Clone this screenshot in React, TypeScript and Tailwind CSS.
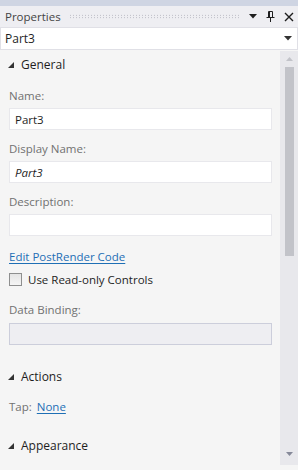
const font = { fontFamily: '"Open Sans", "Noto Sans", sans-serif' };

function Caret() {
  return (
    <svg width="6" height="6" viewBox="0 0 6 6" className="shrink-0">
      <polygon points="6,0 6,6 0,6" fill="#333" />
    </svg>
  );
}

function DownArrow({ color = "#333" }: { color?: string }) {
  return (
    <svg width="8" height="5" viewBox="0 0 8 5">
      <polygon points="0,0 8,0 4,4.5" fill={color} />
    </svg>
  );
}

function Section({ title }: { title: string }) {
  return (
    <div className="flex items-center gap-[7px] pl-[8px] h-[22px] text-[12px] text-[#1e1e1e]">
      <Caret />
      <span>{title}</span>
    </div>
  );
}

function Field({ label, value, italic, disabled }: { label: string; value?: string; italic?: boolean; disabled?: boolean }) {
  return (
    <div className="flex flex-col">
      <div className="text-[11.5px] text-[#717171] h-[20px] flex items-center">{label}</div>
      <div
        className={
          "mt-[3px] h-[22px] flex items-center px-[5px] text-[11.5px] text-[#1e1e1e] border " +
          (disabled ? "bg-[#eeeef2] border-[#cccedb]" : "bg-white border-[#e8e8ec]") +
          (italic ? " italic" : "")
        }
      >
        {value}
      </div>
    </div>
  );
}

export default function App() {
  return (
    <div className="w-[298px] h-[470px] flex flex-col bg-[#f5f5f5] overflow-hidden" style={font}>
      <div className="h-[6px] bg-[#cfd5e3]" />
      <div className="h-[21px] bg-[#eeeef2] flex items-center pl-[5px] pr-[4px] text-[11.5px] text-[#444]">
        <span>Properties</span>
        <div className="flex-1 mx-[8px] h-[5px] bg-[radial-gradient(circle,#b4b4bd_0.6px,transparent_0.8px)] bg-[length:3px_2.5px]" />
        <div className="flex items-center gap-[9px]">
          <DownArrow color="#1e1e1e" />
          <svg width="9" height="11" viewBox="0 0 9 11">
            <path d="M2.5 0.5h4v6h-4z M3.5 0.5v6 M0.5 6.5h8 M4.5 6.5v4.5" stroke="#1e1e1e" fill="none" strokeWidth="1" />
          </svg>
          <svg width="10" height="10" viewBox="0 0 10 10">
            <path d="M1 1L9 9M9 1L1 9" stroke="#1e1e1e" strokeWidth="1.4" />
          </svg>
        </div>
      </div>
      <div className="h-[23px] bg-white border border-[#e0e0e6] flex items-center pl-[4px] pr-[5px] text-[12px] text-[#1e1e1e]">
        <span className="flex-1">Part3</span>
        <DownArrow />
      </div>
      <div className="flex-1 flex mt-[1px] min-h-0">
        <div className="flex-1 flex flex-col pt-[3px] pb-[8px]">
          <Section title="General" />
          <div className="flex flex-col gap-[8px] pl-[9px] pr-[8px] mt-[10px]">
            <Field label="Name:" value="Part3" />
            <Field label="Display Name:" value="Part3" italic />
            <Field label="Description:" />
          </div>
          <div className="pl-[9px] mt-[10px] h-[20px] flex items-center text-[11.5px] text-[#1e6fb5] underline underline-offset-2">
            Edit PostRender Code
          </div>
          <div className="pl-[9px] mt-[4px] h-[20px] flex items-center gap-[6px] text-[11.5px] text-[#1e1e1e]">
            <div className="w-[13px] h-[13px] border border-[#8e8f8f] bg-[linear-gradient(#e5e5e5,#f5f5f5)]" />
            <span>Use Read-only Controls</span>
          </div>
          <div className="pl-[9px] pr-[8px] mt-[10px]">
            <Field label="Data Binding:" disabled />
          </div>
          <div className="mt-[21px]">
            <Section title="Actions" />
          </div>
          <div className="pl-[9px] mt-[9px] h-[20px] flex items-center gap-[5px] text-[11.5px]">
            <span className="text-[#717171]">Tap:</span>
            <span className="text-[#1e6fb5] underline underline-offset-2">None</span>
          </div>
          <div className="mt-[19px]">
            <Section title="Appearance" />
          </div>
        </div>
        <div className="w-[18px] bg-[#e8e8ec] flex flex-col items-center pt-[6px] pb-[9px]">
          <svg width="7" height="4" viewBox="0 0 7 4">
            <polygon points="0,4 7,4 3.5,0" fill="#c2c3c9" />
          </svg>
          <div className="mt-[6px] w-[9px] h-[189px] bg-[#c2c3c9]" />
          <div className="flex-1" />
          <svg width="7" height="4" viewBox="0 0 7 4">
            <polygon points="0,0 7,0 3.5,4" fill="#868999" />
          </svg>
        </div>
      </div>
      <div className="h-[5px] bg-[#f5f5f5]" />
    </div>
  );
}
